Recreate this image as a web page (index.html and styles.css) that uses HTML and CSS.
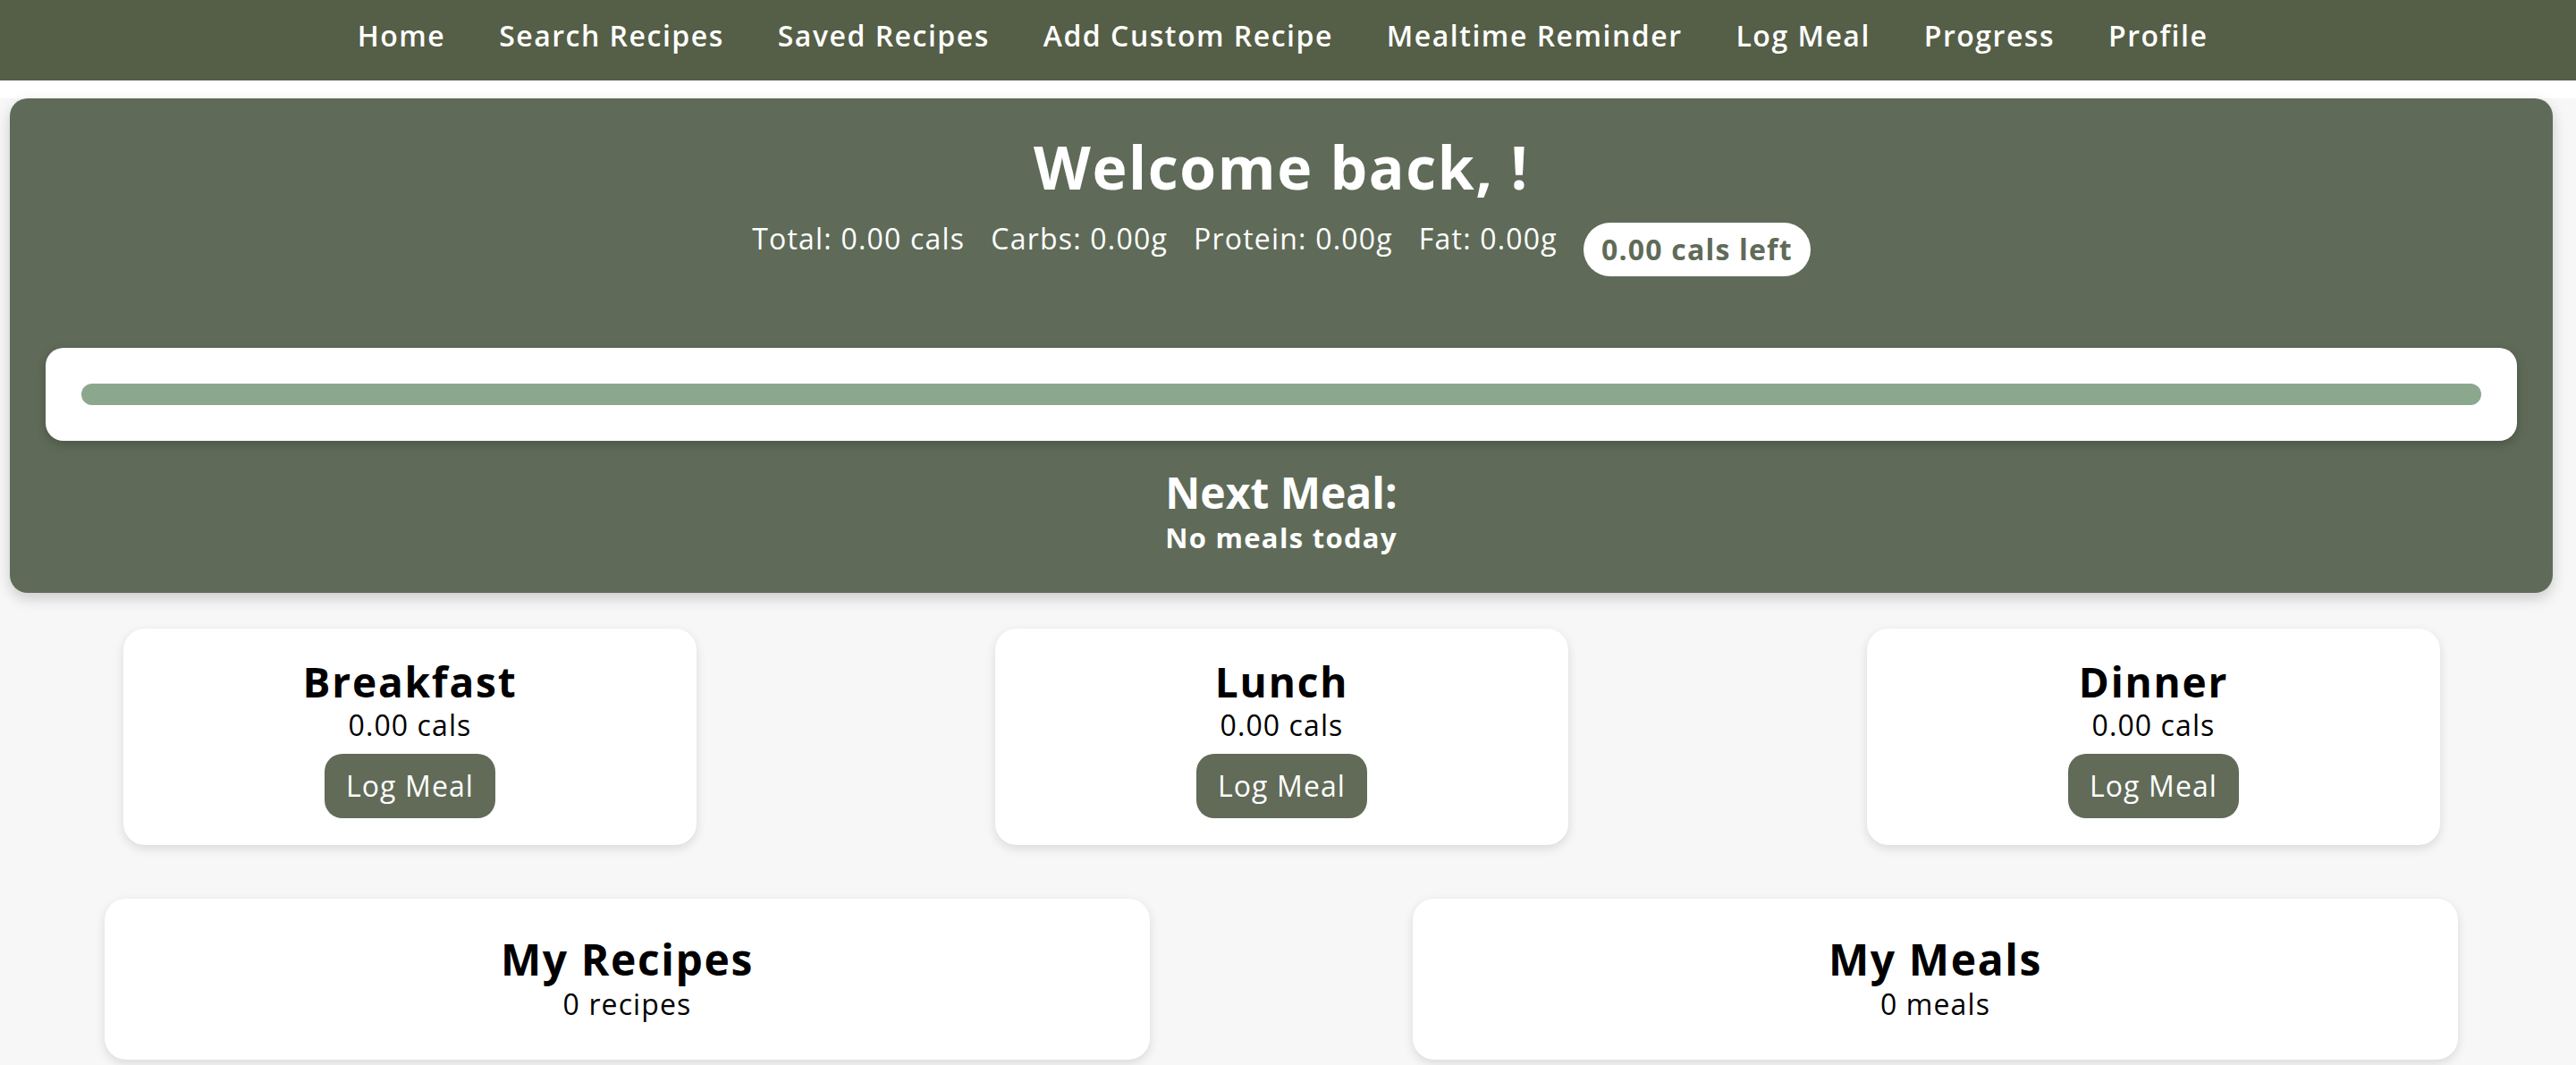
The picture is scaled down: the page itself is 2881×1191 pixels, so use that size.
FILE: index.html
```html
<!DOCTYPE html>
<html lang="en">
<head>
<meta charset="utf-8">
<title>Dashboard</title>
<link rel="stylesheet" href="styles.css">
</head>
<body>
<nav class="topnav">
  <a class="nav-link" href="#">Home</a>
  <a class="nav-link" href="#">Search Recipes</a>
  <a class="nav-link" href="#">Saved Recipes</a>
  <a class="nav-link" href="#">Add Custom Recipe</a>
  <a class="nav-link" href="#">Mealtime Reminder</a>
  <a class="nav-link" href="#">Log Meal</a>
  <a class="nav-link" href="#">Progress</a>
  <a class="nav-link" href="#">Profile</a>
</nav>
<main class="main">
  <section class="hero">
    <h1 class="welcome">Welcome back, !</h1>
    <div class="stats">
      <span class="stat">Total: 0.00 cals</span>
      <span class="stat">Carbs: 0.00g</span>
      <span class="stat">Protein: 0.00g</span>
      <span class="stat">Fat: 0.00g</span>
      <span class="pill">0.00 cals left</span>
    </div>
    <div class="progress-card">
      <div class="progress-bar"></div>
    </div>
    <h2 class="next-title">Next Meal:</h2>
    <p class="next-text">No meals today</p>
  </section>

  <section class="meal-row">
    <div class="meal-card">
      <h3 class="meal-title">Breakfast</h3>
      <p class="meal-cals">0.00 cals</p>
      <button class="log-btn">Log Meal</button>
    </div>
    <div class="meal-card">
      <h3 class="meal-title">Lunch</h3>
      <p class="meal-cals">0.00 cals</p>
      <button class="log-btn">Log Meal</button>
    </div>
    <div class="meal-card">
      <h3 class="meal-title">Dinner</h3>
      <p class="meal-cals">0.00 cals</p>
      <button class="log-btn">Log Meal</button>
    </div>
  </section>

  <section class="summary-row">
    <div class="summary-card">
      <h3 class="summary-title">My Recipes</h3>
      <p class="summary-count">0 recipes</p>
    </div>
    <div class="summary-card">
      <h3 class="summary-title">My Meals</h3>
      <p class="summary-count">0 meals</p>
    </div>
  </section>
</main>
</body>
</html>
```

FILE: styles.css
```css
html {
  overflow: hidden;
}

body {
  margin: 0;
  background: #ffffff;
  font-family: "Open Sans", "Noto Sans", sans-serif;
  color: #000;
}

.topnav {
  display: flex;
  justify-content: center;
  gap: 60px;
  height: 90px;
  box-sizing: border-box;
  padding: 20px 12px 30px 0;
  background: #555e46;
}

.nav-link {
  color: #ffffff;
  text-decoration: none;
  font-size: 32px;
  font-weight: 600;
  line-height: 40px;
  letter-spacing: 1.5px;
  white-space: nowrap;
}

.main {
  margin-top: 20px;
  background: #f7f7f7;
  padding: 0 15px 40px 0;
  min-height: 1200px;
}

.hero {
  margin: 0 11px;
  padding: 36px 40px 44px;
  background: #5f6b58;
  border-radius: 20px;
  box-shadow: 0 6px 16px rgba(0, 0, 0, 0.18);
  color: #ffffff;
  text-align: center;
}

.welcome {
  margin: 0;
  font-size: 66px;
  line-height: 80px;
  font-weight: 700;
  letter-spacing: 1.6px;
}

.stats {
  margin-top: 21px;
  display: flex;
  justify-content: center;
  align-items: flex-start;
  gap: 29px;
}

.stat {
  font-size: 32px;
  line-height: 40px;
  letter-spacing: 1.2px;
  white-space: nowrap;
}

.pill {
  margin-top: 2px;
  padding: 10px 20px;
  background: #ffffff;
  color: #5f6b58;
  border-radius: 30px;
  font-size: 32px;
  line-height: 40px;
  font-weight: 700;
  letter-spacing: 1.2px;
  white-space: nowrap;
}

.progress-card {
  margin-top: 80px;
  padding: 40px;
  background: #ffffff;
  border-radius: 20px;
  box-shadow: 0 4px 12px rgba(0, 0, 0, 0.22);
}

.progress-bar {
  height: 24px;
  border-radius: 12px;
  background: #8ba88e;
}

.next-title {
  margin: 30px 0 0;
  font-size: 48px;
  line-height: 56px;
  font-weight: 700;
}

.next-text {
  margin: 4px 0 0;
  font-size: 31px;
  line-height: 36px;
  font-weight: 700;
  letter-spacing: 1.3px;
}

.meal-row {
  margin-top: 40px;
  display: flex;
  justify-content: space-between;
  padding: 0 137px 0 138px;
}

.meal-card {
  width: 641px;
  height: 242px;
  box-sizing: border-box;
  padding: 32px 0 30px;
  background: #ffffff;
  border-radius: 24px;
  box-shadow: 0 4px 12px rgba(0, 0, 0, 0.12);
  display: flex;
  flex-direction: column;
  align-items: center;
}

.meal-title {
  margin: 0;
  font-size: 46px;
  line-height: 54px;
  font-weight: 700;
  letter-spacing: 1.8px;
}

.meal-cals {
  margin: 2px 0 0;
  font-size: 32px;
  line-height: 40px;
  letter-spacing: 1.1px;
}

.log-btn {
  margin-top: 12px;
  padding: 16px 24px;
  border: none;
  border-radius: 20px;
  background: #616b58;
  color: #ffffff;
  font-family: "Open Sans", "Noto Sans", sans-serif;
  font-size: 32px;
  line-height: 40px;
  letter-spacing: 1.1px;
}

.summary-row {
  margin-top: 60px;
  display: flex;
  justify-content: space-between;
  padding: 0 117px;
}

.summary-card {
  width: 1169px;
  height: 180px;
  box-sizing: border-box;
  padding: 40px 0 42px;
  background: #ffffff;
  border-radius: 24px;
  box-shadow: 0 4px 12px rgba(0, 0, 0, 0.12);
  text-align: center;
}

.summary-title {
  margin: 0;
  font-size: 48px;
  line-height: 56px;
  font-weight: 700;
  letter-spacing: 1.6px;
}

.summary-count {
  margin: 2px 0 0;
  font-size: 32px;
  line-height: 40px;
  letter-spacing: 1.1px;
}
```
